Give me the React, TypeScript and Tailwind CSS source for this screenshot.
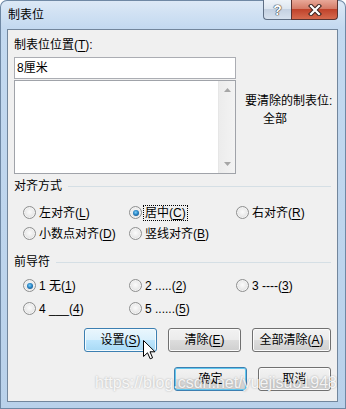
import React from "react";

const font = "font-['Liberation_Sans','Noto_Sans_CJK_SC',sans-serif]";

function Radio({ checked }: { checked?: boolean }) {
  return (
    <span className="flex h-[13px] w-[13px] shrink-0 items-center justify-center rounded-full border border-[#8e8f8f] bg-[radial-gradient(circle_at_50%_45%,#fbfbfb_0%,#ececec_45%,#cfcfcf_100%)] shadow-[inset_0_0_0_1px_#f4f4f4]">
      {checked && (
        <span className="h-[6px] w-[6px] rounded-full bg-[radial-gradient(circle_at_45%_40%,#7fd0f8_0%,#2a86c6_45%,#0d3e6e_100%)]" />
      )}
    </span>
  );
}

function Option({
  label,
  hot,
  checked,
  focused,
}: {
  label: string;
  hot: string;
  checked?: boolean;
  focused?: boolean;
}) {
  return (
    <div className="flex h-full items-center gap-[1px]">
      <Radio checked={checked} />
      <span
        className={`whitespace-nowrap border px-[1px] leading-[14px] ${
          focused ? "border-dotted border-black" : "border-transparent"
        }`}
      >
        {label}(<span className="underline underline-offset-2">{hot}</span>)
      </span>
    </div>
  );
}

function Group({ title }: { title: string }) {
  return (
    <div className="flex h-[16px] items-center">
      <span>{title}</span>
      <div className="ml-[6px] h-px flex-1 bg-[#d5dfe5]" />
    </div>
  );
}

function Button({
  label,
  hot,
  width = "w-[73px]",
  kind = "normal",
}: {
  label: string;
  hot?: string;
  width?: string;
  kind?: "normal" | "hover" | "default";
}) {
  const look =
    kind === "hover"
      ? "border-[#3c7fb1] bg-[linear-gradient(to_bottom,#eaf6fd_0%,#d9f0fc_50%,#bee6fd_50%,#a7d9f5_100%)] shadow-[inset_0_0_0_1px_#f4fbfe]"
      : kind === "default"
        ? "border-[#3c7fb1] bg-[linear-gradient(to_bottom,#f2f2f2_0%,#ebebeb_50%,#dddddd_50%,#cfcfcf_100%)] shadow-[inset_0_0_0_1px_#62c8ef]"
        : "border-[#707070] bg-[linear-gradient(to_bottom,#f2f2f2_0%,#ebebeb_50%,#dddddd_50%,#cfcfcf_100%)] shadow-[inset_0_0_0_1px_#fbfbfb]";
  return (
    <div className={`flex h-[24px] ${width} items-center justify-center rounded-[3px] border ${look}`}>
      {label}
      {hot && (
        <>
          (<span className="underline underline-offset-2">{hot}</span>)
        </>
      )}
    </div>
  );
}

export default function App() {
  return (
    <div
      className={`relative h-[409px] w-[346px] overflow-hidden rounded-t-[7px] bg-[linear-gradient(to_bottom,#dde9f6_0px,#c3d9f0_28px,#b9d1ea_100%)] shadow-[inset_0_0_0_1px_#6f88a4] ${font} text-[12px] leading-[16px] text-black`}
    >
      {/* title bar */}
      <div className="flex h-[29px] items-start">
        <div className="pl-[8px] pt-[7px] text-[12px]">制表位</div>
        <div className="ml-auto mr-[8px] flex">
          <div className="flex h-[20px] w-[28px] items-center justify-center rounded-bl-[4px] border border-t-0 border-r-0 border-[#5f6f84] bg-[linear-gradient(to_bottom,#eef3f9_0%,#dde6f0_45%,#c4d1e1_50%,#d6e1ee_100%)]">
            <span className="text-[14px] font-bold leading-[16px] text-white [text-shadow:0_0_1px_#333,0_0_1px_#333,0_0_1px_#333]">
              ?
            </span>
          </div>
          <div className="flex h-[20px] w-[47px] items-center justify-center rounded-br-[4px] border border-t-0 border-[#5a3431] bg-[linear-gradient(to_bottom,#e8a898_0%,#d57c68_45%,#c0432b_50%,#d66a4e_100%)]">
            <svg width="14" height="12" viewBox="0 0 14 12">
              <path d="M3 2 L11 10 M11 2 L3 10" stroke="#3b2420" strokeWidth="4.2" strokeLinecap="square" />
              <path d="M3 2 L11 10 M11 2 L3 10" stroke="#ffffff" strokeWidth="2.2" strokeLinecap="square" />
            </svg>
          </div>
        </div>
      </div>

      {/* client area */}
      <div className="ml-[7px] flex h-[373px] w-[331px] flex-col border border-[#72869c] bg-[#f0f0f0] px-[6px] pt-[7px]">
        <div>
          制表位位置(<span className="underline underline-offset-2">T</span>):
        </div>
        <div className="mt-[4px] flex">
          <div className="w-[222px] shrink-0">
            <div className="flex h-[22px] items-center border border-[#abadb3] bg-white pl-[2px]">8厘米</div>
            <div className="mt-[1px] flex h-[94px] border border-[#a0a3a9] bg-white">
              <div className="flex-1" />
              <div className="flex w-[17px] flex-col items-center justify-between border-l border-[#e6e6e6] bg-[linear-gradient(to_right,#ececec,#f3f3f3)] py-[7px]">
                <svg width="7" height="4" viewBox="0 0 7 4">
                  <polygon points="0,4 3.5,0 7,4" fill="#a6a6a6" />
                </svg>
                <svg width="7" height="4" viewBox="0 0 7 4">
                  <polygon points="0,0 3.5,4 7,0" fill="#a6a6a6" />
                </svg>
              </div>
            </div>
          </div>
          <div className="ml-[9px] whitespace-nowrap pt-[36px]">
            <div>要清除的制表位:</div>
            <div className="mt-[2px] pl-[18px]">全部</div>
          </div>
        </div>

        <div className="mt-[4px]">
          <Group title="对齐方式" />
        </div>
        <div className="mt-[8px] grid grid-cols-[106px_107px_1fr] pl-[9px]">
          <div className="h-[21px]">
            <Option label="左对齐" hot="L" />
          </div>
          <div className="h-[21px]">
            <Option label="居中" hot="C" checked focused />
          </div>
          <div className="h-[21px]">
            <Option label="右对齐" hot="R" />
          </div>
          <div className="h-[21px]">
            <Option label="小数点对齐" hot="D" />
          </div>
          <div className="h-[21px]">
            <Option label="竖线对齐" hot="B" />
          </div>
        </div>

        <div className="mt-[10px]">
          <Group title="前导符" />
        </div>
        <div className="mt-[5px] grid grid-cols-[106px_107px_1fr] gap-y-[2px] pl-[9px]">
          <div className="h-[21px]">
            <Option label="1 无" hot="1" checked />
          </div>
          <div className="h-[21px]">
            <Option label="2 ....." hot="2" />
          </div>
          <div className="h-[21px]">
            <Option label="3 ----" hot="3" />
          </div>
          <div className="h-[21px]">
            <Option label="4 ___" hot="4" />
          </div>
          <div className="h-[21px]">
            <Option label="5 ......" hot="5" />
          </div>
        </div>

        <div className="mt-[9px] flex justify-end gap-[11px]">
          <Button label="设置" hot="S" kind="hover" />
          <Button label="清除" hot="E" />
          <Button label="全部清除" hot="A" width="w-[79px]" />
        </div>
        <div className="mt-[15px] flex justify-end gap-[11px]">
          <Button label="确定" kind="default" />
          <Button label="取消" />
        </div>
      </div>

      {/* mouse pointer */}
      <svg className="absolute left-[143px] top-[340px]" width="13" height="20" viewBox="0 0 13 20">
        <path
          d="M0.5 0.5 L0.5 16.5 L4.5 12.8 L7.2 18.8 L9.6 17.8 L7 11.8 L12 11.8 Z"
          fill="#ffffff"
          stroke="#000000"
          strokeWidth="1"
          strokeLinejoin="miter"
        />
      </svg>

      {/* watermark */}
      <div className="absolute left-[95px] top-[374px] font-['Liberation_Sans',sans-serif] text-[16px] leading-[18px] text-white/85 [text-shadow:0_0_2px_rgba(0,0,0,0.3)]">
        https://blog.csdn.net/yuejisuo1948
      </div>
    </div>
  );
}
